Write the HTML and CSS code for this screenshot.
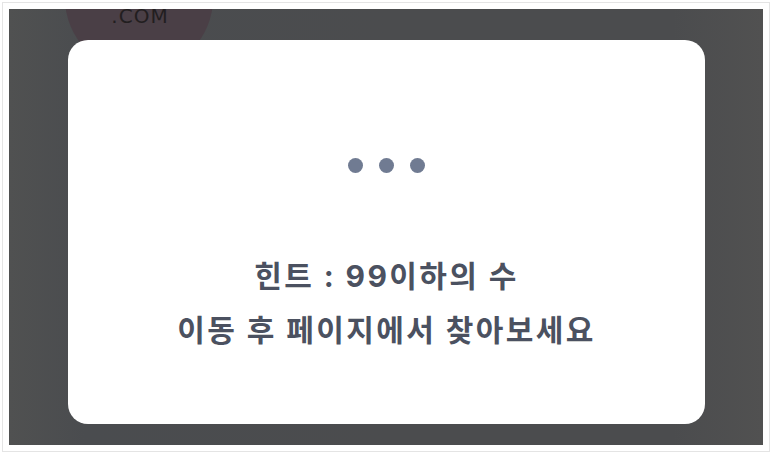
FILE: index.html
```html
<!DOCTYPE html>
<html lang="ko">
<head>
<meta charset="utf-8">
<link rel="stylesheet" href="styles.css">
</head>
<body>
<div class="frame">
  <div class="stage">
    <div class="logo-circle"><span class="logo-text">.COM</span></div>
    <div class="modal">
      <div class="dots"><span class="dot"></span><span class="dot"></span><span class="dot"></span></div>
      <p class="msg">힌트 : 99이하의 수<br>이동 후 페이지에서 찾아보세요</p>
    </div>
  </div>
</div>
</body>
</html>
```
FILE: styles.css
```css
html, body { margin: 0; padding: 0; background: #ffffff; }
body { width: 773px; height: 455px; overflow: hidden; }
.frame {
  margin: 2px;
  border: 1px solid #e4e4e4;
  padding: 6px;
  width: 754px;
}
.stage {
  position: relative;
  overflow: hidden;
  height: 436px;
  background: linear-gradient(90deg, #505151 0%, #4a4c4f 10%, #4b4c4e 50%, #4b4c4e 88%, #515151 100%);
  padding: 31px 0 0 59px;
  box-sizing: border-box;
}
.logo-circle {
  position: absolute;
  left: 56px;
  top: -85px;
  width: 148px;
  height: 148px;
  border-radius: 50%;
  background: #4a3f46;
  display: flex;
  justify-content: center;
  align-items: flex-start;
}
.logo-text {
  font-family: "DejaVu Sans", "Liberation Sans", sans-serif;
  font-size: 20px;
  line-height: 20px;
  color: #221e20;
  letter-spacing: 1px;
  margin-top: 82px;
  margin-left: 2px;
}
.modal {
  position: relative;
  width: 637px;
  height: 384px;
  background: #ffffff;
  border-radius: 20px;
  display: flex;
  flex-direction: column;
  align-items: center;
  padding-top: 118px;
  box-sizing: border-box;
}
.dots { display: flex; gap: 16px; }
.dot {
  width: 15px;
  height: 15px;
  border-radius: 50%;
  background: #707b92;
}
.msg {
  margin: 76px 0 0;
  text-align: center;
  font-family: "Inter", "Noto Sans CJK KR", "Noto Sans", sans-serif;
  font-weight: 700;
  font-size: 30px;
  line-height: 54px;
  letter-spacing: 2.4px;
  color: #4b5160;
}
```
